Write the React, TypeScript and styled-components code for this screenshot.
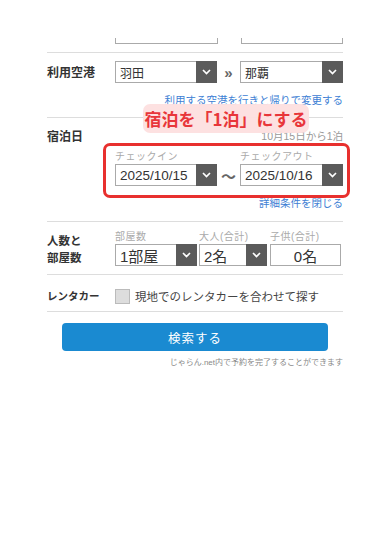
import styled, { createGlobalStyle } from "styled-components";

const GlobalStyle = createGlobalStyle`
  body {
    margin: 0;
    background: #fff;
    font-family: "Liberation Sans", "Noto Sans CJK JP", sans-serif;
    color: #333;
  }
`;

const Page = styled.div`
  width: 296px;
  padding: 0 0 0 47px;
`;

const TopRow = styled.div`
  display: flex;
  padding: 38px 0 8px 68px;
  gap: 23px;
`;

const StubBox = styled.div`
  height: 5px;
  flex: 1;
  border: 1px solid #aaa;
  border-top: none;
`;

const Section = styled.div<{ $pt: number; $pb: number }>`
  position: relative;
  border-top: 1px solid #ddd;
  padding: ${({ $pt, $pb }) => `${$pt}px 0 ${$pb}px`};
`;

const Row = styled.div<{ $center?: boolean }>`
  display: flex;
  align-items: ${({ $center }) => ($center ? "center" : "flex-start")};
`;

const Label = styled.div<{ $size?: number; $lh?: number }>`
  width: 68px;
  flex-shrink: 0;
  font-family: "Noto Sans CJK JP", sans-serif;
  font-size: ${({ $size }) => $size ?? 12}px;
  line-height: ${({ $lh }) => $lh ?? 14}px;
  font-weight: 700;
  color: #333;
`;

const Content = styled.div`
  flex: 1;
  display: flex;
  flex-direction: column;
`;

const Pair = styled.div<{ $gap?: number }>`
  display: flex;
  align-items: center;
  gap: ${({ $gap }) => $gap ?? 0}px;
`;

const Select = styled.div<{ $w: number; $size?: number }>`
  width: ${({ $w }) => $w}px;
  height: 22px;
  box-sizing: border-box;
  border: 1px solid #aaa;
  background: #fff;
  display: flex;
  align-items: center;
  font-size: ${({ $size }) => $size ?? 12}px;
  color: #333;
`;

const SelectText = styled.span`
  flex: 1;
  padding-left: 4px;
  white-space: nowrap;
`;

const Arrow = styled.div`
  width: 21px;
  height: 22px;
  margin: -1px -1px -1px 0;
  background: #5b5b5b;
  display: flex;
  align-items: center;
  justify-content: center;
`;

const Sep = styled.span<{ $size: number }>`
  width: 23px;
  text-align: center;
  color: #666;
  font-size: ${({ $size }) => $size}px;
  font-weight: 700;
`;

const Link = styled.div<{ $mt: number }>`
  margin-top: ${({ $mt }) => $mt}px;
  text-align: right;
  font-size: 10.5px;
  line-height: 14px;
  color: #3d80d4;
`;

const Summary = styled.div`
  text-align: right;
  font-size: 10.5px;
  line-height: 14px;
  color: #999;
`;

const DateGroup = styled.div`
  position: relative;
  margin-top: 8px;
`;

const Frame = styled.div`
  position: absolute;
  top: -8px;
  bottom: -12px;
  left: -12px;
  right: -7px;
  border: 3px solid #e8302e;
  border-radius: 7px;
  pointer-events: none;
`;

const SubLabels = styled.div`
  display: flex;
  margin-bottom: 1px;
`;

const SubLabel = styled.div<{ $w: number }>`
  width: ${({ $w }) => $w}px;
  font-size: 10px;
  line-height: 12px;
  color: #aaa;
  letter-spacing: 0.5px;
`;

const Bubble = styled.div`
  position: absolute;
  top: -14px;
  left: 96px;
  width: 166px;
  height: 29px;
  border-radius: 7px;
  background: rgba(253, 224, 224, 0.96);
  color: #e8363a;
  font-size: 17px;
  font-weight: 700;
  font-family: "Noto Sans CJK JP", sans-serif;
  display: flex;
  align-items: center;
  justify-content: center;
`;

const Plain = styled.div<{ $w: number }>`
  width: ${({ $w }) => $w}px;
  height: 22px;
  box-sizing: border-box;
  border: 1px solid #aaa;
  margin-left: 1px;
  font-size: 15px;
  display: flex;
  align-items: center;
  justify-content: center;
`;

const Check = styled.div`
  width: 15px;
  height: 15px;
  box-sizing: border-box;
  background: #ddd;
  border: 1px solid #bbb;
  margin-right: 5px;
`;

const CheckText = styled.span`
  font-size: 11.5px;
  color: #444;
`;

const Footer = styled.div`
  border-top: 1px solid #ddd;
  padding-top: 11px;
  display: flex;
  flex-direction: column;
  align-items: center;
`;

const SearchButton = styled.button`
  width: 266px;
  height: 28px;
  border: none;
  border-radius: 4px;
  background: #1a8ad1;
  color: #fff;
  font-size: 12.5px;
  font-family: "Noto Sans CJK JP", sans-serif;
  letter-spacing: 1px;
`;

const Note = styled.div`
  align-self: flex-end;
  margin-top: 5px;
  font-size: 8px;
  color: #888;
`;

const Chevron = () => (
  <svg width="9" height="6" viewBox="0 0 9 6">
    <polyline points="1,1 4.5,4.5 8,1" fill="none" stroke="#fff" strokeWidth="1.7" />
  </svg>
);

const Dropdown = ({ w, text, size }: { w: number; text: string; size?: number }) => (
  <Select $w={w} $size={size}>
    <SelectText>{text}</SelectText>
    <Arrow>
      <Chevron />
    </Arrow>
  </Select>
);

export default function App() {
  return (
    <Page>
      <GlobalStyle />
      <TopRow>
        <StubBox />
        <StubBox />
      </TopRow>

      <Section $pt={8} $pb={10}>
        <Row $center>
          <Label>利用空港</Label>
          <Content>
            <Pair>
              <Dropdown w={102} text="羽田" />
              <Sep $size={15}>»</Sep>
              <Dropdown w={103} text="那覇" />
            </Pair>
          </Content>
        </Row>
        <Link $mt={10}>利用する空港を行きと帰りで変更する</Link>
      </Section>

      <Section $pt={11} $pb={11}>
        <Row>
          <Label>宿泊日</Label>
          <Content>
            <Summary>10月15日から1泊</Summary>
            <DateGroup>
              <SubLabels>
                <SubLabel $w={125}>チェックイン</SubLabel>
                <SubLabel $w={103}>チェックアウト</SubLabel>
              </SubLabels>
              <Pair>
                <Dropdown w={102} text="2025/10/15" size={13.5} />
                <Sep $size={15}>〜</Sep>
                <Dropdown w={103} text="2025/10/16" size={13.5} />
              </Pair>
              <Frame />
            </DateGroup>
            <Link $mt={10}>詳細条件を閉じる</Link>
          </Content>
        </Row>
        <Bubble>宿泊を「1泊」にする</Bubble>
      </Section>

      <Section $pt={9} $pb={8}>
        <Row $center>
          <Label $size={11.5} $lh={17}>
            人数と
            <br />
            部屋数
          </Label>
          <Content>
            <SubLabels>
              <SubLabel $w={84}>部屋数</SubLabel>
              <SubLabel $w={71}>大人(合計)</SubLabel>
              <SubLabel $w={71}>子供(合計)</SubLabel>
            </SubLabels>
            <Pair $gap={2}>
              <Dropdown w={82} text="1部屋" size={15} />
              <Dropdown w={68} text="2名" size={15} />
              <Plain $w={71}>0名</Plain>
            </Pair>
          </Content>
        </Row>
      </Section>

      <Section $pt={13} $pb={7}>
        <Row $center>
          <Label $size={10.5}>レンタカー</Label>
          <Pair>
            <Check />
            <CheckText>現地でのレンタカーを合わせて探す</CheckText>
          </Pair>
        </Row>
      </Section>

      <Footer>
        <SearchButton>検索する</SearchButton>
        <Note>じゃらん.net内で予約を完了することができます</Note>
      </Footer>
    </Page>
  );
}
